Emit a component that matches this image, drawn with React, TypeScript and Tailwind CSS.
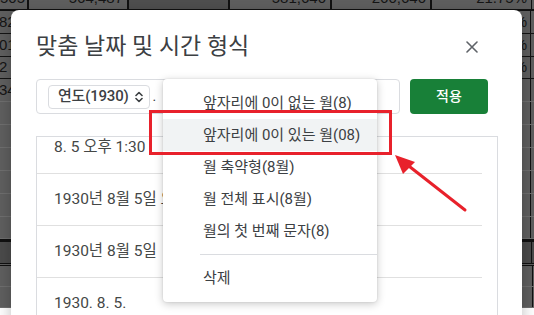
import React from "react";

const COLS = [29, 100, 101, 102, 100, 100, 2];

type Row = { h: number; line: string; bg?: string; left?: string; right?: string };

const ROWS: Row[] = [
  { h: 23, line: "border-[#141414]", left: "82", right: "18.40%" },
  { h: 23, line: "border-[#141414]", left: "01", right: "19.62%" },
  { h: 22, line: "border-[#141414]", left: "2", right: "20.11%" },
  { h: 23, line: "border-[#6f6f6f]", left: "34" },
  { h: 23, line: "border-[#6f6f6f]" },
  { h: 23, line: "border-[#6f6f6f]" },
  { h: 23, line: "border-[#6f6f6f]" },
  { h: 23, line: "border-[#6f6f6f]" },
  { h: 23, line: "border-[#6f6f6f]" },
  { h: 22, line: "border-[#6f6f6f]" },
];

function Sheet() {
  const top = ["505", "564,487", "", "581,640", "260,640", "21.75%", ""];
  return (
    <div className="flex flex-col bg-[#5f5f5f] text-[15px] text-[#151515]" style={{ fontFamily: '"Liberation Sans", Arial, sans-serif' }}>
      <div className="flex h-[11px] border-b-2 border-[#111]">
        {COLS.map((w, i) => (
          <div
            key={i}
            style={{ width: w }}
            className={`h-[9px] overflow-hidden shrink-0 ${i < 5 ? "border-r-2 border-[#111]" : i === 5 ? "border-r border-[#111]" : ""} ${i === 2 ? "bg-[#4f4f4f]" : ""} ${i === 0 ? "text-left" : "text-right pr-[4px]"}`}
          >
            <div className="leading-[16px] -mt-[10px] whitespace-nowrap">{top[i]}</div>
          </div>
        ))}
      </div>
      {ROWS.map((r, ri) => (
        <div key={ri} className={`flex border-b ${r.line}`} style={{ height: r.h }}>
          {COLS.map((w, i) => (
            <div
              key={i}
              style={{ width: w }}
              className={`shrink-0 overflow-hidden flex items-center whitespace-nowrap ${i === 5 ? "border-r border-[#111] justify-end pr-[3px]" : ""} ${i === 0 ? "-ml-[1px]" : ""}`}
            >
              {i === 0 ? r.left : i === 5 ? r.right : ""}
            </div>
          ))}
        </div>
      ))}
      <div className="h-[3px] bg-[#111]" />
      <div className="flex h-[21px] bg-[#4b4b4b]">
        <div className="w-[532px] border-r border-[#111]" />
      </div>
      <div className="h-[3px] border-y border-[#111] bg-[#5f5f5f]" />
      <div className="flex h-[21px] border-b border-[#6f6f6f]">
        <div className="w-[533px] border-r border-[#111]" />
      </div>
      <div className="flex h-[21px] border-b border-[#6f6f6f]">
        <div className="w-[533px] border-r border-[#111]" />
      </div>
    </div>
  );
}

function Updown() {
  return (
    <svg width="8" height="12" viewBox="0 0 8 12" fill="none" stroke="#3c4043" strokeWidth="1.6" strokeLinecap="round" strokeLinejoin="round">
      <path d="M1 4.5 L4 1.5 L7 4.5" />
      <path d="M1 7.5 L4 10.5 L7 7.5" />
    </svg>
  );
}

function CloseX() {
  return (
    <svg width="12" height="12" viewBox="0 0 12 12" fill="none" stroke="#5f6368" strokeWidth="1.6" strokeLinecap="round">
      <path d="M1 1 L11 11 M11 1 L1 11" />
    </svg>
  );
}

const FONT = { fontFamily: 'Roboto, "Noto Sans CJK KR", "Noto Sans", sans-serif' };

export default function App() {
  const rows = ["8. 5 오후 1:30", "1930년 8월 5일 오후 1시 30분 0초", "1930년 8월 5일", "1930. 8. 5.", "1930. 8. 5 오후 1:30:00"];
  const items = ["앞자리에 0이 없는 월(8)", "앞자리에 0이 있는 월(08)", "월 축약형(8월)", "월 전체 표시(8월)", "월의 첫 번째 문자(8)"];
  return (
    <div className="relative w-[534px] h-[315px] overflow-hidden" style={FONT}>
      <Sheet />

      {/* dialog */}
      <div className="absolute left-[11px] top-[10px] w-[511px] h-[340px] bg-white rounded-[8px] shadow-[0_4px_16px_rgba(0,0,0,0.25)] flex flex-col" style={FONT}>
        <div className="mt-[22px] h-[30px] pl-[25px] pr-[38px] flex items-center justify-between">
          <div className="text-[23px] text-[#3c4043] leading-[30px] whitespace-nowrap">맞춤 날짜 및 시간 형식</div>
          <div className="w-[24px] h-[24px] flex items-center justify-center">
            <CloseX />
          </div>
        </div>

        <div className="mt-[17px] pl-[25px] flex gap-[10px]">
          <div className="w-[364px] h-[35px] border border-[#dadce0] rounded-[4px] flex items-center pl-[11px]">
            <div className="h-[24px] border border-[#dadce0] rounded-[4px] flex items-center pl-[9px] pr-[6px] gap-[6px]">
              <span className="text-[15px] font-medium text-[#3c4043] leading-none whitespace-nowrap tracking-[-0.2px]">연도(1930)</span>
              <Updown />
            </div>
            <span className="ml-[3px] text-[14px] text-[#3c4043]">.</span>
          </div>
          <div className="w-[78px] h-[35px] rounded-[4px] bg-[#188038] flex items-center justify-center text-white text-[14px] font-medium">
            적용
          </div>
        </div>

        <div className="mt-[22px] ml-[25px] w-[462px] h-[220px] border-x border-t border-[#dadce0] overflow-hidden">
          <div className="-mt-[15px] pr-[15px]">
            {rows.map((t, i) => (
              <div key={i} className="h-[52px] border-b border-[#e0e0e0] flex items-center pl-[17px] text-[15.5px] text-[#444746] whitespace-nowrap">
                {t}
              </div>
            ))}
          </div>
        </div>
      </div>

      {/* dropdown menu */}
      <div className="absolute left-[163px] top-[79px] w-[214px] bg-white rounded-[4px] shadow-[0_2px_8px_rgba(0,0,0,0.22),0_0_2px_rgba(0,0,0,0.12)] py-[8px]" style={FONT}>
        {items.map((t, i) => (
          <div key={i} className={`h-[32px] flex items-center pl-[40px] text-[15px] text-[#3c4043] whitespace-nowrap ${i === 1 ? "bg-[#f1f3f4]" : ""}`}>
            {t}
          </div>
        ))}
        <div className="my-[7px] ml-[37px] h-px bg-[#dadce0]" />
        <div className="h-[32px] flex items-center pl-[40px] text-[15px] text-[#3c4043]">삭제</div>
      </div>

      {/* red highlight box */}
      <div className="absolute left-[149px] top-[110px] w-[243px] h-[45px] border-[3px] border-[#e8212b]" />

      {/* red arrow */}
      <svg className="absolute left-0 top-0" width="534" height="315" viewBox="0 0 534 315">
        <line x1="465" y1="210" x2="405" y2="163" stroke="#e8212b" strokeWidth="3" strokeLinecap="round" />
        <polygon points="395,155 415,162 403,174" fill="#e8212b" />
      </svg>
    </div>
  );
}
